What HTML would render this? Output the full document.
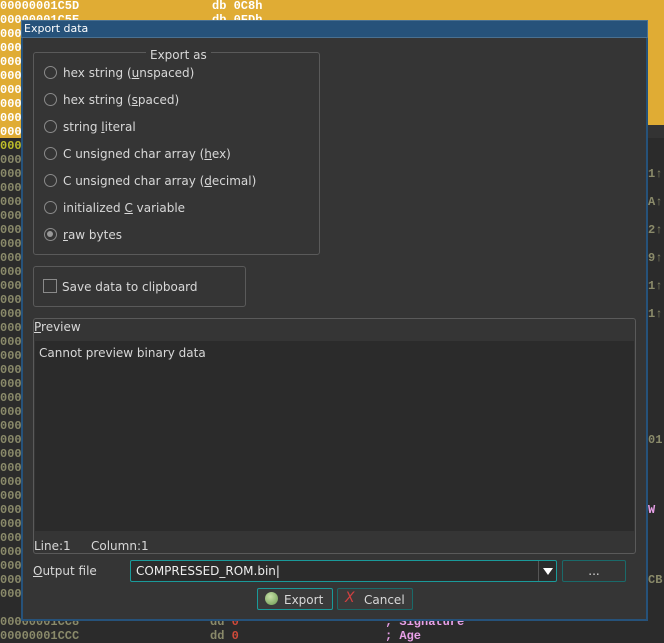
<!DOCTYPE html>
<html><head><style>
*{margin:0;padding:0;box-sizing:border-box}
body{width:664px;height:641px;overflow:hidden;background:#2b2b2b;position:relative;font-family:"DejaVu Sans","Liberation Sans",sans-serif;font-size:12px;color:#d8d8d8}
.a{position:absolute;white-space:nowrap}
.code{font-family:"Liberation Mono","DejaVu Sans Mono",monospace;font-size:12px;font-weight:bold;line-height:14px}
.r{position:absolute;left:44px;width:13px;height:13px;border:1px solid #8a8a8a;border-radius:50%}
.u{text-decoration:underline}
.t{margin-top:1px}
</style></head><body>
<div class="a" style="left:0;top:0;width:664px;height:125px;background:#e0ac34"></div>
<div class="a" style="left:0;top:125px;width:22px;height:13px;background:#e0ac34"></div>
<div class="a" style="left:647px;top:125px;width:17px;height:13px;background:#333"></div>
<div class="a code" style="left:0;top:-1px;color:#fff">00000001C5D<br>00000001C5E<br>0000<br>0000<br>0000<br>0000<br>0000<br>0000<br>0000<br>0000</div>
<div class="a code" style="left:212px;top:-1px;color:#fff">db 0C8h<br>db 0FDh</div>
<div class="a code" style="left:0;top:139px;color:#bdbd2a">000</div>
<div class="a code" style="left:0;top:153px;color:#8a8a6a">0000<br>0000<br>0000<br>0000<br>0000<br>0000<br>0000<br>0000<br>0000<br>0000<br>0000<br>0000<br>0000<br>0000<br>0000<br>0000<br>0000<br>0000<br>0000<br>0000<br>0000<br>0000<br>0000<br>0000<br>0000<br>0000<br>0000<br>0000<br>0000<br>0000<br>0000<br>0000</div>
<div class="a code" style="left:648px;top:167px;color:#8a8a6a">1↑</div>
<div class="a code" style="left:648px;top:195px;color:#8a8a6a">A↑</div>
<div class="a code" style="left:648px;top:223px;color:#8a8a6a">2↑</div>
<div class="a code" style="left:648px;top:251px;color:#8a8a6a">9↑</div>
<div class="a code" style="left:648px;top:279px;color:#8a8a6a">1↑</div>
<div class="a code" style="left:648px;top:307px;color:#8a8a6a">1↑</div>
<div class="a code" style="left:648px;top:433px;color:#8a8a6a">01</div>
<div class="a code" style="left:648px;top:503px;color:#e8a0e8">W</div>
<div class="a code" style="left:648px;top:573px;color:#8a8a6a">CB</div>
<div class="a code" style="left:0;top:615px;color:#8a8a6a">00000001CC8<br>00000001CCC</div>
<div class="a code" style="left:210px;top:615px;color:#8a8a6a">dd <span style="color:#d04a3a">0</span><br>dd <span style="color:#d04a3a">0</span></div>
<div class="a code" style="left:385px;top:615px;color:#e8a0e8">; Signature<br>; Age</div>

<div class="a" style="left:21px;top:20px;width:627px;height:601px;background:#353535;border:2px solid #26527a;border-top:none"></div>
<div class="a" style="left:21px;top:20px;width:627px;height:18px;background:#26527a;border:1px solid #4a7090"></div>
<div class="a" style="left:24px;top:21px;font-size:11px;color:#fff;line-height:15px">Export data</div>

<div class="a" style="left:33px;top:52px;width:287px;height:203px;border:1px solid #5a5a5a;border-radius:3px"></div>
<div class="a" style="left:146px;top:47px;padding:0 4px;background:#353535;line-height:16px">Export as</div>
<div class="r" style="top:66px"></div><div class="a" style="left:63px;top:66px">hex string (<span class="u">u</span>nspaced)</div>
<div class="r" style="top:93px"></div><div class="a" style="left:63px;top:93px">hex string (<span class="u">s</span>paced)</div>
<div class="r" style="top:120px"></div><div class="a" style="left:63px;top:120px">string <span class="u">l</span>iteral</div>
<div class="r" style="top:147px"></div><div class="a" style="left:63px;top:147px">C unsigned char array (<span class="u">h</span>ex)</div>
<div class="r" style="top:174px"></div><div class="a" style="left:63px;top:174px">C unsigned char array (<span class="u">d</span>ecimal)</div>
<div class="r" style="top:201px"></div><div class="a" style="left:63px;top:201px">initialized <span class="u">C</span> variable</div>
<div class="r" style="top:228px"></div><div class="a" style="border-radius:50%;background:#999;width:6px;height:6px;left:47px;top:231px"></div><div class="a" style="left:63px;top:228px"><span class="u">r</span>aw bytes</div>

<div class="a" style="left:33px;top:266px;width:213px;height:41px;border:1px solid #5a5a5a;border-radius:3px"></div>
<div class="a" style="left:43px;top:279px;width:14px;height:14px;border:1px solid #8a8a8a"></div>
<div class="a" style="left:62px;top:280px">Save data to clipboard</div>

<div class="a" style="left:33px;top:318px;width:603px;height:236px;border:1px solid #5a5a5a;border-radius:3px"></div>
<div class="a" style="left:34px;top:320px"><span class="u">P</span>review</div>
<div class="a" style="left:35px;top:341px;width:599px;height:190px;background:#2b2b2b"></div>
<div class="a" style="left:39px;top:346px">Cannot preview binary data</div>
<div class="a" style="left:34px;top:539px">Line:1</div>
<div class="a" style="left:91px;top:539px">Column:1</div>

<div class="a" style="left:33px;top:564px"><span class="u">O</span>utput file</div>
<div class="a" style="left:130px;top:560px;width:427px;height:22px;border:1px solid #1a9a9a;border-radius:2px;background:#2b2b2b"></div>
<div class="a" style="left:136px;top:564px;color:#eee">COMPRESSED_ROM.bin|</div>
<div class="a" style="left:538px;top:561px;width:1px;height:20px;background:#555"></div>
<div class="a" style="left:543px;top:568px;width:0;height:0;border-left:5px solid transparent;border-right:5px solid transparent;border-top:7px solid #fff"></div>
<div class="a" style="left:562px;top:560px;width:64px;height:22px;border:1px solid #1a6a6a;border-radius:2px;text-align:center;line-height:20px">...</div>

<div class="a" style="left:257px;top:588px;width:76px;height:22px;border:1px solid #1a9a9a;border-radius:2px;background:#3a3a3a"></div>
<div class="a" style="left:265px;top:592px;width:13px;height:13px;border-radius:50%;background:radial-gradient(circle at 40% 35%,#c8e0a8,#6a9a50)"></div>
<div class="a" style="left:284px;top:593px">Export</div>
<div class="a" style="left:337px;top:588px;width:76px;height:22px;border:1px solid #1a6a6a;border-radius:2px;background:#3a3a3a"></div>
<div class="a" style="left:345px;top:590px;color:#d04040;font-style:italic;font-size:14px">X</div>
<div class="a" style="left:364px;top:593px">Cancel</div>
</body></html>
